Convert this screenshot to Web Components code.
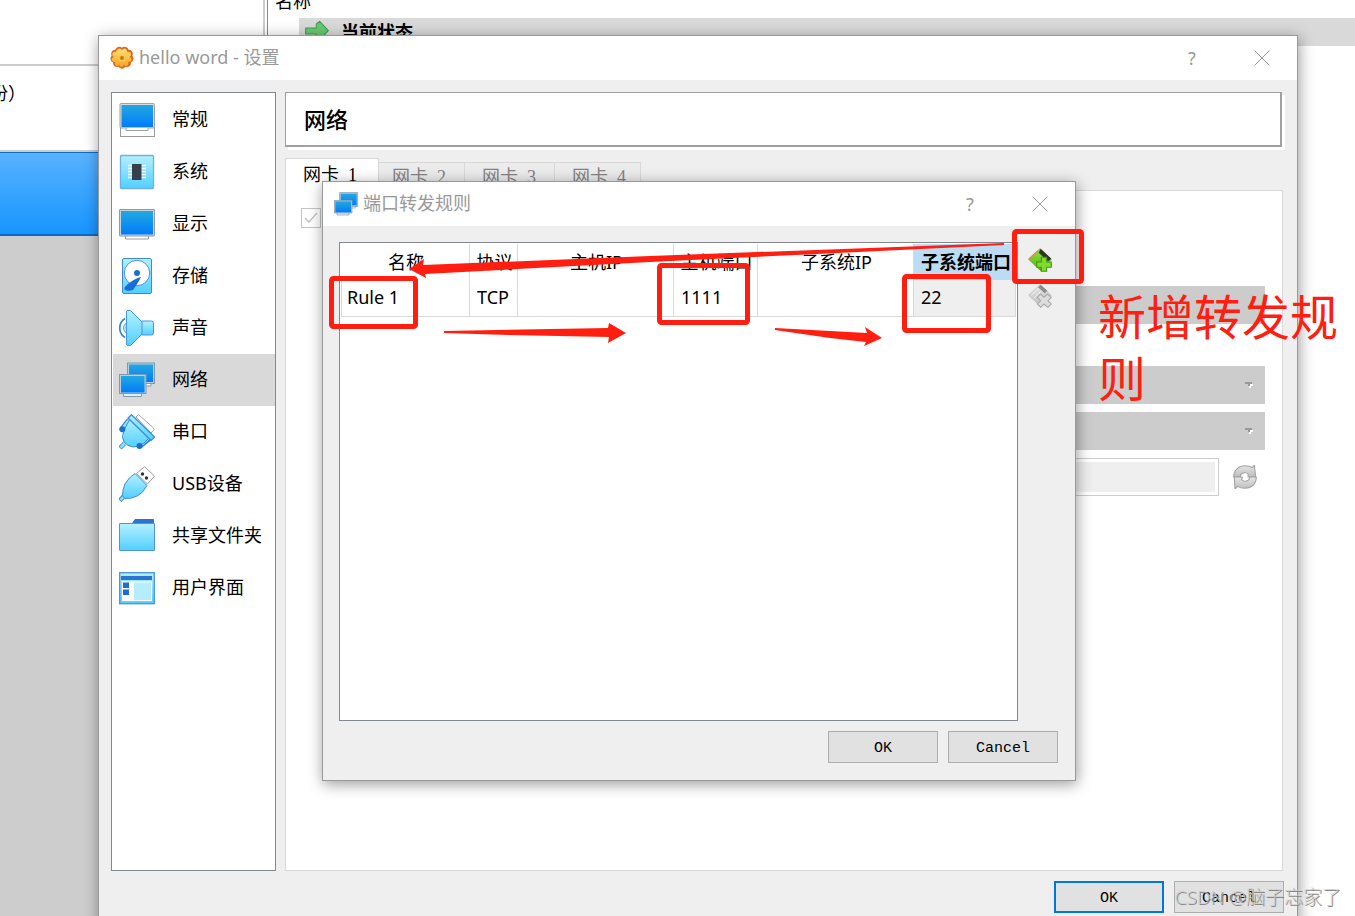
<!DOCTYPE html>
<html lang="zh-CN">
<head>
<meta charset="utf-8">
<meta name="viewport" content="width=device-width, initial-scale=1">
<title>hello word - 设置</title>
<style>
  body {
    margin: 0;
    font-family: "Noto Sans", "Noto Sans CJK SC", sans-serif;
    font-size: 18px;
    line-height: 24px;
    color: #000;
  }
</style>
</head>
<body>
<vb-desktop></vb-desktop>

<script>
// shared gradients, ids are local to each shadow root
const defs = `
  <defs>
    <linearGradient id="screen" x1="0" y1="0" x2="0" y2="1"><stop offset="0" stop-color="#22a9e0"/><stop offset="1" stop-color="#007cfa"/></linearGradient>
    <linearGradient id="sky" x1="0" y1="0" x2="0" y2="1"><stop offset="0" stop-color="#b4f1ff"/><stop offset="1" stop-color="#52cfff"/></linearGradient>
    <linearGradient id="green" x1="0" y1="0" x2="0" y2="1"><stop offset="0" stop-color="#8fe23c"/><stop offset="1" stop-color="#4fb80e"/></linearGradient>
    <linearGradient id="silver" x1="0" y1="0" x2="0" y2="1"><stop offset="0" stop-color="#e6e6e6"/><stop offset="1" stop-color="#bdbdbd"/></linearGradient>
    <linearGradient id="sun" x1="0" y1="0" x2="0" y2="1"><stop offset="0" stop-color="#ffe070"/><stop offset="1" stop-color="#f8a41e"/></linearGradient>
  </defs>`;

const icons = {
  general: `<rect x="1.5" y="25.5" width="34" height="9" fill="#fff" stroke="#999"/>
    <rect x="1" y="1.5" width="34.500" height="24.500" rx="1" fill="#d6dde2" stroke="#a3a3a3"/>
    <rect x="2.500" y="3" width="31.500" height="22" fill="url(#screen)"/>
    <path d="M7 26v2.500h22V26" fill="#fff" stroke="#a3a3a3"/>`,
  system: `<rect x="1.500" y="1.500" width="33" height="33" rx="1" fill="url(#sky)" stroke="#6fb0e6" stroke-width="1.300"/>
    <path d="M9 11.500h18M9 14.500h18M9 17.500h18M9 20.500h18M9 23.500h18" stroke="#fff" stroke-width="1.300"/>
    <rect x="13" y="10" width="9.500" height="16" rx=".5" fill="#373f4d"/>`,
  display: `<path d="M6.500 29v4h23v-4" fill="#fff" stroke="#999"/>
    <rect x=".5" y="3.500" width="35" height="26.500" rx=".5" fill="#c3d4df" stroke="#999"/>
    <rect x="2" y="5" width="32" height="23.500" fill="url(#screen)"/>`,
  storage: `<rect x="3.500" y=".5" width="29" height="35" rx="1.500" fill="url(#sky)" stroke="#3f8ad8"/>
    <circle cx="18" cy="15" r="12.700" fill="#fff" stroke="#4a90e0"/>
    <circle cx="18" cy="15" r="3" fill="#1a6fd0"/>
    <path d="M22 19c-5 1-11 5-14 8-3 2-3 4-2 5s6 1 8 0c3-4 6-9 8-13z" fill="#1a6fd6"/>`,
  sound: `<path d="M6 8.500C-1 13-1 23 6 27.500" fill="none" stroke="#3488da" stroke-width="1.700"/>
    <path d="M7.500 13c-4 2-4 8 0 10z" fill="#a5e6fb" stroke="#5aa7df"/>
    <path d="M22.500 11h10q2 0 2 2v10q0 2-2 2h-10z" fill="url(#sky)" stroke="#4896dc"/>
    <path d="M7.500 2q0-1.500 1.500-1.500h2.500L23 12v12L11.500 35.500H9q-1.500 0-1.500-1.500z" fill="url(#sky)" stroke="#4896dc"/>`,
  network: `<path d="M24 21v3h8v-3" fill="#fff" stroke="#8199b0"/>
    <rect x="8.500" y="1" width="27" height="20.500" fill="#b6cede" stroke="#8199b0"/>
    <rect x="10" y="2.500" width="24" height="17.500" fill="url(#screen)"/>
    <path d="M4.500 31v3.500h18V31" fill="#e4edf5" stroke="#8199b0"/>
    <rect x=".5" y="12.500" width="26.500" height="19" fill="#b6cede" stroke="#8199b0"/>
    <rect x="2" y="14" width="23.500" height="16.500" fill="url(#screen)"/>`,
  serial: `<path d="M17 3l2.500-2.500L34.500 14q1 1.500 0 2.500L32 19z" fill="#fff" stroke="#a3a3a3"/>
    <path d="M3 15l7-9M21 32l10-8" stroke="#2f7fd8" stroke-width="5"/>
    <path d="M4 14l7-9M22 31l9-8" stroke="#8fe1fc" stroke-width="3"/>
    <path d="M5.500 29.500L1 34" stroke="#3b8ddb" stroke-width="4.500"/>
    <path d="M5.500 29.500L1.500 33.500" stroke="#8fe1fc" stroke-width="2.500"/>
    <path d="M11 5L30 24l-5 5q-5 4-11 4-6-1-9-5-3-5 0-12z" fill="url(#sky)" stroke="#3b8ddb"/>
    <path d="M9 4L12.500.7 35.500 23l-3.500 3.500z" fill="url(#sky)" stroke="#3b8ddb" stroke-width="1.300" stroke-linejoin="round"/>
    <circle cx="3.300" cy="15.300" r="3" fill="#1a6fd6"/><circle cx="20.500" cy="32" r="3" fill="#1a6fd6"/>`,
  usb: `<path d="M17.500 7.500L25.500.7 35.500 10l-7 8z" fill="#fff" stroke="#9a9a9a" stroke-linejoin="round"/>
    <circle cx="23.500" cy="8" r="1.700" fill="#333"/><circle cx="27.500" cy="12" r="1.700" fill="#333"/>
    <path d="M5 30L.8 34.500" stroke="#3b8ddb" stroke-width="4.500"/>
    <path d="M5 30l-3.500 4" stroke="#8fe1fc" stroke-width="2.500"/>
    <path d="M16 7.500L28 19.500q-4 8-10 10.500-6 3-12 2.500L3.500 30q0-7 2.500-12 4-7 10-10.500z" fill="url(#sky)" stroke="#3b8ddb" stroke-linejoin="round"/>`,
  folder: `<path d="M13 6l3-4.500h18.500v6H13z" fill="#2c74d0" stroke="#2c74d0"/>
    <rect x=".5" y="5.500" width="35" height="27" rx=".5" fill="url(#sky)" stroke="#4f94d2"/>`,
  ui: `<rect x=".7" y="2.700" width="34.600" height="31" fill="url(#sky)" stroke="#4b93d8" stroke-width="1.300"/>
    <rect x="2" y="6" width="31" height="4" fill="#2c74d0"/>
    <rect x="3" y="11.500" width="30" height="19.500" fill="#fff"/>
    <rect x="4" y="12.500" width="6" height="5.500" fill="#1a6fd0"/><rect x="4" y="19.500" width="6" height="5.500" fill="#1a6fd0"/>
    <rect x="15" y="12.500" width="17" height="17.500" fill="#b5edff"/>`,
  gear: `<path d="M12 1.500q3-1 6 1 3-2 6-1 3 1 4 4 4 0 5.500 3 1.500 3 0 6 2.500 3 1.500 6-1 3-3.500 4 0 4-2.500 6-3 2-6 .5-2 3-5 3t-5-3q-3 1.500-6-.5-2.500-2-2.500-6-2.500-1-3.500-4-1-3 1.500-6-1.500-3 0-6 1.500-3 5.500-3 1-3 4-4z" fill="#e2631b"/>
    <path d="M13 4q3-1 5 2 2-3 5-2 3 1 3 5 4-1 5.500 2 1 3-2 5.500 3.500 1.500 3 4.500-1 3-5 3 1 4-1.500 5.500-3 1.500-5-1.500-1 3.500-4 3.500t-3-3.500q-2 3-5 1.500-2.500-1.500-1.500-5.500-4 0-5-3-.5-3 3-4.500-3-2.500-2-5.500 1.500-3 5.500-2 0-4 4-5z" fill="url(#sun)"/>
    <circle cx="18" cy="18" r="4.500" fill="#f0a531" stroke="#ffe07c"/>
    <circle cx="18" cy="18" r="2.500" fill="#b9731d"/>`,
  arrow: `<path d="M1 12h16V6l5-4 13 14-13 14-5-4v-5H1z" fill="#68c971" stroke="#3f9c4e" stroke-width="1.600" stroke-linejoin="round"/>`,
  add: `<path d="M1 17L18 1l17 16-16 17z" fill="url(#green)" stroke="#6b8a3b"/>
    <path d="M1 17L15 4" stroke="#e8894a" stroke-width="2"/>
    <path d="M19 1l16 15-5 4L16 7z" fill="#2f332c"/>
    <path d="M20 14h8v7h7v8h-7v6h-8v-6h-7v-8h7z" fill="#7edc2c" stroke="#45930f" stroke-width="1.600"/>`,
  remove: `<path d="M1 17L18 1l17 16-16 17z" fill="url(#silver)" stroke="#b9b9b9"/>
    <path d="M5 17L16 6M9 21L20 10" stroke="#f2f2f2" stroke-width="1.500"/>
    <path d="M19 1l10 9-4 4L15 5z" fill="#8c8c8c"/>
    <path d="M14 20l5-5 5 5 5-5 6 5-5 5 5 5-5 5-6-5-5 5-5-5 5-5z" fill="#dcdcdc" stroke="#a9a9a9" stroke-width="1.600"/>`,
  refresh: `<g fill="url(#silver)" stroke="#a2a2a2" stroke-width="1.600" stroke-linejoin="round">
    <path d="M1 18C1 8 8 1 18 1q7 0 11 3l3-4 2 18H22l1-4q-3-3-7-2-5 1-5 6z"/>
    <path d="M35 18c0 10-7 17-17 17q-7 0-11-3l-4 4-1-18h12l-1 4q3 3 7 2 5-1 5-6z"/></g>
    <path d="M20 11l-6 7h5l-3 7 7-8h-4z" fill="#fff"/>`
};

class VbIcon extends HTMLElement {
  connectedCallback() {
    this.attachShadow({ mode: 'open' });
    this.shadowRoot.innerHTML = `
      <style>
        :host { display: block; flex: none; width: 24px; height: 24px; }
        :host([size="large"]) { width: 36px; height: 36px; }
        svg { display: block; width: 100%; height: 100%; }
      </style>
      <svg viewBox="0 0 36 36" aria-hidden="true">${defs}${icons[this.getAttribute('name')]}</svg>`;
  }
}
customElements.define('vb-icon', VbIcon);

class VbButton extends HTMLElement {
  connectedCallback() {
    this.attachShadow({ mode: 'open' });
    this.shadowRoot.innerHTML = `
      <style>
        :host { display: block; }
        button {
          display: block;
          width: 110px;
          height: 32px;
          padding: 2px 0 0;
          border: 1px solid #adadad;
          background: #e1e1e1;
          color: #000;
          font: 15px "Liberation Mono", monospace;
        }
        :host([primary]) button { border: 2px solid #0078d7; }
      </style>
      <button type="button"><slot></slot></button>`;
  }
}
customElements.define('vb-button', VbButton);

// window frame: title bar, body and a row of actions
class VbWindow extends HTMLElement {
  connectedCallback() {
    this.attachShadow({ mode: 'open' });
    this.shadowRoot.innerHTML = `
      <style>
        :host {
          display: flex;
          flex-direction: column;
          box-sizing: border-box;
          border: 1px solid #999;
          background: #efefef;
          box-shadow: 1px 3px 14px rgba(0, 0, 0, .4);
        }
        header {
          display: flex;
          align-items: center;
          gap: 5px;
          flex: none;
          height: 44px;
          padding-left: 11px;
          background: #fff;
          color: #999;
        }
        h1 { flex: 1; margin: 0; padding-bottom: 2px; font-size: 18px; font-weight: 400; }
        header button {
          display: flex;
          align-items: center;
          justify-content: center;
          width: 70px;
          height: 44px;
          padding: 0 0 1px;
          border: 0;
          background: none;
          color: #999;
          font: inherit;
        }
        .controls { display: flex; }
        main { flex: 1; min-height: 0; display: flex; }
        footer { display: flex; justify-content: flex-end; gap: 10px; padding-top: 10px; }
      </style>
      <header>
        <vb-icon name="${this.getAttribute('icon')}"></vb-icon>
        <h1>${this.getAttribute('caption')}</h1>
        <div class="controls">
          <button type="button" aria-label="Help">?</button>
          <button type="button" aria-label="Close">
            <svg width="16" height="16" viewBox="0 0 16 16"><path d="M.5.5l15 15M15.500.5l-15 15" stroke="#999"/></svg>
          </button>
        </div>
      </header>
      <main><slot></slot></main>
      <footer part="actions"><slot name="actions"></slot></footer>`;
  }
}
customElements.define('vb-window', VbWindow);

class VbNav extends HTMLElement {
  connectedCallback() {
    const items = [
      ['general', '常规'], ['system', '系统'], ['display', '显示'], ['storage', '存储'], ['sound', '声音'],
      ['network', '网络'], ['serial', '串口'], ['usb', 'USB设备'], ['folder', '共享文件夹'], ['ui', '用户界面']
    ];
    this.attachShadow({ mode: 'open' });
    this.shadowRoot.innerHTML = `
      <style>
        :host {
          display: block;
          box-sizing: border-box;
          padding: 1px 0 1px 1px;
          border: 1px solid #828790;
          background: #fff;
        }
        button {
          display: flex;
          align-items: center;
          gap: 17px;
          width: 100%;
          height: 52px;
          padding: 0 0 0 6px;
          border: 0;
          background: none;
          color: #000;
          font: inherit;
          white-space: nowrap;
        }
        button[aria-current] { background: #d9d9d9; }
        span { padding-bottom: 2px; }
      </style>
      <nav>
        ${items.map(([icon, text]) => `
        <button type="button" ${icon === 'network' ? 'aria-current="page"' : ''}>
          <vb-icon name="${icon}" size="large"></vb-icon><span>${text}</span>
        </button>`).join('')}
      </nav>`;
  }
}
customElements.define('vb-nav', VbNav);

class VbNetworkPage extends HTMLElement {
  connectedCallback() {
    this.attachShadow({ mode: 'open' });
    this.shadowRoot.innerHTML = `
      <style>
        :host { display: flex; flex-direction: column; min-width: 0; isolation: isolate; }
        h2 {
          margin: 0 1px 11px 0;
          padding: 14px 18px;
          border: 1px solid #a0a0a0;
          border-width: 1px 2px 2px 1px;
          background: #fff;
          box-shadow: 3px 3px #fff;
          font-size: 22px;
          font-weight: 500;
          line-height: 24px;
        }
        .tabs { display: flex; align-items: flex-end; height: 32px; }
        .tabs button {
          box-sizing: border-box;
          width: 90px;
          height: 28px;
          padding: 0 0 0 17px;
          border: 1px solid #d9d9d9;
          border-width: 1px 1px 0 0;
          background: #ececec;
          color: #838383;
          font: 15px/24px "Liberation Mono", monospace;
          text-align: left;
          white-space: nowrap;
        }
        .tabs button[aria-selected="true"] {
          width: 94px;
          height: 33px;
          margin: 0 -4px -1px 0;
          border-left-width: 1px;
          background: #fff;
          color: #000;
          z-index: 1;
        }
        .tabs button:last-child { width: 86px; }
        .tabs span { font-family: "Noto Sans CJK SC", sans-serif; font-size: 18px; }
        .tabs b { font: 18px "Liberation Serif", serif; }
        .panel {
          flex: 1;
          padding: 17px 17px 17px 15px;
          border: 1px solid #d9d9d9;
          background: #fff;
        }
        input[type="checkbox"] {
          appearance: none;
          display: block;
          box-sizing: border-box;
          width: 20px;
          height: 20px;
          margin: 0 0 58px;
          border: 1px solid #c4c4c4;
          background: #fff url('data:image/svg+xml,<svg xmlns="http://www.w3.org/2000/svg" viewBox="0 0 18 18"><path d="M3 9l4 4 8-9" fill="none" stroke="%23c4c4c4" stroke-width="1.500"/></svg>');
        }
        .fields { display: flex; flex-direction: column; gap: 8px; margin-left: 200px; }
        select {
          appearance: none;
          height: 38px;
          border: 0;
          background: #ccc;
          opacity: 1;
        }
        select.first { margin-bottom: 34px; }
        .combo { display: grid; align-items: center; }
        .combo select, .combo svg { grid-area: 1 / 1; }
        .combo svg { justify-self: end; margin-right: 12px; }
        .mac { display: flex; align-items: center; gap: 14px; padding-right: 8px; }
        input[type="text"] {
          flex: 1;
          box-sizing: border-box;
          height: 38px;
          border: 1px solid #ccc;
          padding: 3px;
          background: #efefef;
          box-shadow: inset 0 0 0 3px #fff;
        }
        .mac button { padding: 0; border: 0; background: none; }
      </style>
      <h2>网络</h2>
      <div class="tabs" role="tablist">
        ${[1, 2, 3, 4].map(n => `<button type="button" role="tab" aria-selected="${n === 1}"><span>网卡</span> <b>${n}</b></button>`).join('')}
      </div>
      <div class="panel">
        <input type="checkbox" checked disabled aria-label="Enable adapter">
        <div class="fields">
          <select class="first" disabled aria-label="Attachment"></select>
          ${['Adapter', 'Mode'].map(label => `
          <div class="combo">
            <select disabled aria-label="${label}"></select>
            <svg width="8" height="6" viewBox="0 0 8 6"><path d="M5 2h3v2H6v2H4z" fill="#fff"/><path d="M0 0h7v2H5v2H3V2H0z" fill="#999"/></svg>
          </div>`).join('')}
          <div class="mac">
            <input type="text" disabled aria-label="MAC">
            <button type="button" disabled aria-label="Refresh"><vb-icon name="refresh"></vb-icon></button>
          </div>
        </div>
      </div>`;
  }
}
customElements.define('vb-network-page', VbNetworkPage);

class VbRules extends HTMLElement {
  connectedCallback() {
    this.attachShadow({ mode: 'open' });
    this.shadowRoot.innerHTML = `
      <style>
        :host { display: flex; flex: 1; gap: 10px; }
        .box {
          flex: 1;
          padding: 1px;
          border: 1px solid #828790;
          background: #fff;
        }
        table { width: 100%; table-layout: fixed; border-collapse: separate; border-spacing: 0; }
        th, td {
          box-sizing: border-box;
          border-right: 1px solid #d9d9d9;
          white-space: nowrap;
        }
        th { height: 36px; padding: 0 0 0 2px; font-weight: 400; }
        td { height: 37px; padding: 0 0 2px 7px; border-bottom: 1px solid #d9d9d9; }
        td:first-child { border-left: 1px solid #d9d9d9; padding-left: 5px; }
        th:last-child { border-right: 0; background: #bcdcf4; font-weight: 700; }
        td:last-child { background: #efefef; }
        .tools { display: flex; flex-direction: column; gap: 12px; width: 30px; padding-top: 6px; }
        .tools button { width: 24px; padding: 0; border: 0; background: none; }
      </style>
      <div class="box">
        <table>
          <colgroup><col style="width:129px"><col style="width:48px"><col style="width:156px"><col style="width:84px"><col style="width:156px"><col></colgroup>
          <thead>
            <tr><th>名称</th><th>协议</th><th>主机IP</th><th>主机端口</th><th>子系统IP</th><th>子系统端口</th></tr>
          </thead>
          <tbody>
            <tr><td>Rule 1</td><td>TCP</td><td></td><td>1111</td><td></td><td>22</td></tr>
          </tbody>
        </table>
      </div>
      <div class="tools">
        <button type="button" aria-label="Add rule"><vb-icon name="add"></vb-icon></button>
        <button type="button" aria-label="Remove rule" disabled><vb-icon name="remove"></vb-icon></button>
      </div>`;
  }
}
customElements.define('vb-rules', VbRules);

// the manager window behind the dialogs
class VbManager extends HTMLElement {
  connectedCallback() {
    this.attachShadow({ mode: 'open' });
    this.shadowRoot.innerHTML = `
      <style>
        :host { display: flex; height: 100%; background: #fff; }
        .machines {
          display: flex;
          flex-direction: column;
          flex: none;
          width: 263px;
          border-right: 2px solid #ccc;
        }
        .bar { height: 64px; border-bottom: 2px solid #ccc; }
        .machine { height: 69px; padding-top: 15px; border-bottom: 2px solid #ccc; text-indent: -10px; }
        .selected {
          box-sizing: border-box;
          height: 84px;
          border: 1px solid #0a6cc8;
          border-width: 1px 0 2px;
          background: linear-gradient(#58b2ff, #1795ff);
        }
        .rest { flex: 1; background: #cdcdcd; }
        .snapshots { flex: 1; margin-left: 2px; border-left: 1px solid #828790; }
        .head { height: 29px; margin-top: -11px; padding-left: 7px; }
        .row {
          display: flex;
          align-items: center;
          gap: 12px;
          height: 28px;
          margin-left: 31px;
          padding-left: 6px;
          background: #d9d9d9;
          font-weight: 700;
        }
      </style>
      <div class="machines">
        <div class="bar"></div>
        <div class="machine">份）</div>
        <div class="selected"></div>
        <div class="rest"></div>
      </div>
      <div class="snapshots">
        <div class="head">名称</div>
        <div class="row"><vb-icon name="arrow"></vb-icon>当前状态</div>
      </div>`;
  }
}
customElements.define('vb-manager', VbManager);

// red marks drawn over the windows
class VbMarks extends HTMLElement {
  connectedCallback() {
    this.attachShadow({ mode: 'open' });
    this.shadowRoot.innerHTML = `
      <style>
        :host { display: block; color: #ff1e10; pointer-events: none; }
        svg { display: block; }
        p {
          position: absolute;
          left: 1098px;
          top: 286px;
          width: 250px;
          margin: 0;
          font-size: 48px;
          line-height: 62px;
        }
      </style>
      <svg width="1100" height="360" viewBox="0 0 1100 360" aria-hidden="true">
        <g fill="none" stroke="currentColor" stroke-width="5">
          <rect x="331.5" y="278.5" width="84" height="48" rx="2"/>
          <rect x="659.5" y="265.5" width="88" height="57" rx="2"/>
          <rect x="904.5" y="276.5" width="84" height="54" rx="2"/>
          <rect x="1014.5" y="231.5" width="67" height="50" rx="2"/>
        </g>
        <g fill="currentColor">
          <path d="M1004 243v2L650 262 425 274l1 4-17-9 15-10-1 6 227-9z"/>
          <path d="M444 331l164-3 1-5 17 10-18 10 1-6-100-2-65-2z"/>
          <path d="M775 328l92 5-2-6 17 11-18 8 2-4-36-4-55-8z"/>
        </g>
      </svg>
      <p>新增转发规则</p>`;
  }
}
customElements.define('vb-marks', VbMarks);

class VbDesktop extends HTMLElement {
  connectedCallback() {
    this.attachShadow({ mode: 'open' });
    this.shadowRoot.innerHTML = `
      <style>
        :host { display: block; position: relative; height: 100vh; overflow: hidden; }
        .settings, .forwarding, vb-marks, .watermark { position: absolute; }
        /* runs past the bottom of the desktop */
        .settings { left: 98px; right: 57px; top: 35px; bottom: -12px; }
        .settings::part(actions) { padding-right: 13px; padding-bottom: 14px; }
        .content {
          flex: 1;
          display: grid;
          grid-template-columns: 165px 1fr;
          gap: 9px;
          padding: 12px 14px 0 12px;
        }
        .forwarding { left: 322px; top: 181px; width: 754px; height: 600px; }
        .forwarding::part(actions) { padding-right: 17px; padding-bottom: 17px; }
        .forwarding vb-rules { margin: 16px 17px 0 16px; }
        vb-marks { left: 0; top: 0; }
        .watermark {
          right: 14px;
          bottom: 5px;
          color: rgba(205, 205, 205, .8);
          font-size: 19px;
          font-weight: 300;
          line-height: 28px;
          text-shadow: 1px 1px 0 #888;
        }
      </style>
      <vb-manager></vb-manager>
      <vb-window class="settings" icon="gear" caption="hello word - 设置">
        <div class="content">
          <vb-nav></vb-nav>
          <vb-network-page></vb-network-page>
        </div>
        <vb-button slot="actions" primary>OK</vb-button>
        <vb-button slot="actions">Cancel</vb-button>
      </vb-window>
      <vb-window class="forwarding" icon="network" caption="端口转发规则">
        <vb-rules></vb-rules>
        <vb-button slot="actions">OK</vb-button>
        <vb-button slot="actions">Cancel</vb-button>
      </vb-window>
      <vb-marks></vb-marks>
      <div class="watermark">CSDN @脑子忘家了</div>`;
  }
}
customElements.define('vb-desktop', VbDesktop);
</script>
</body>
</html>
